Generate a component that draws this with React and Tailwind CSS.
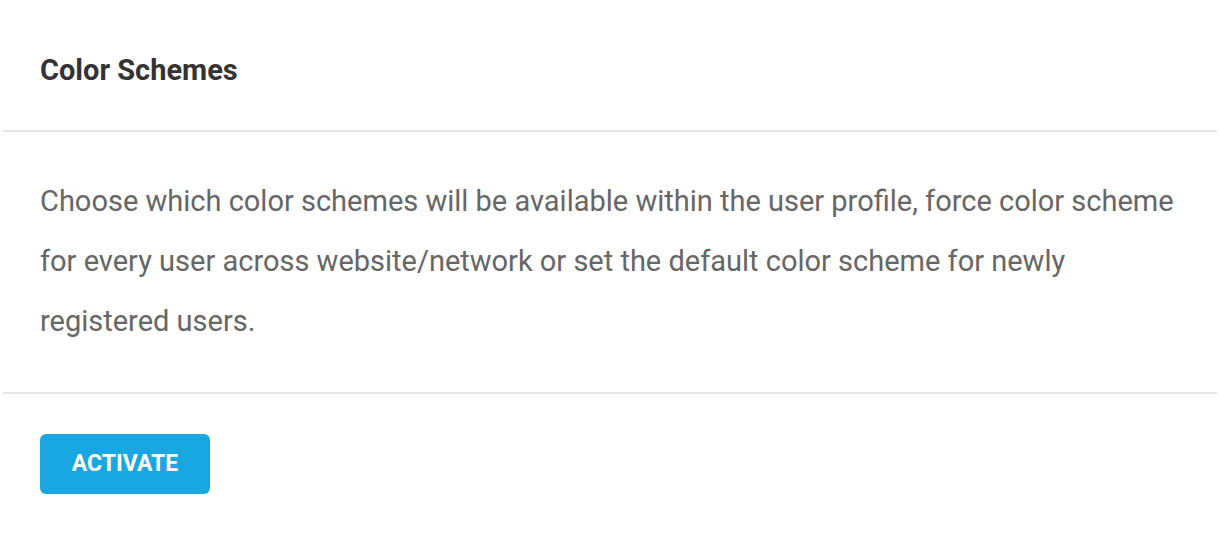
import React from 'react';

function App() {
  return (
    <div className="min-h-[544px] w-full bg-white px-[3px] font-['Roboto',sans-serif]">
      {/* Header */}
      <div className="flex h-[132px] items-center border-b-2 border-[#e6e6e6] px-[37px] pt-[11px]">
        <h2 className="text-[29px] font-bold leading-none text-[#333333]">Color Schemes</h2>
      </div>

      {/* Description */}
      <div className="border-b-2 border-[#e6e6e6] px-[37px] pt-[39px] pb-[41px]">
        <p className="text-[29px] leading-[60px] text-[#666666]">
          Choose which color schemes will be available within the user profile, force color scheme
          for every user across website/network or set the default color scheme for newly
          registered users.
        </p>
      </div>

      {/* Footer */}
      <div className="px-[37px] pt-[40px] pb-[50px]">
        <button className="h-[60px] w-[170px] rounded-[6px] bg-[#19a7e2] text-[23px] font-bold uppercase text-white">
          Activate
        </button>
      </div>
    </div>
  );
}

export default App;
